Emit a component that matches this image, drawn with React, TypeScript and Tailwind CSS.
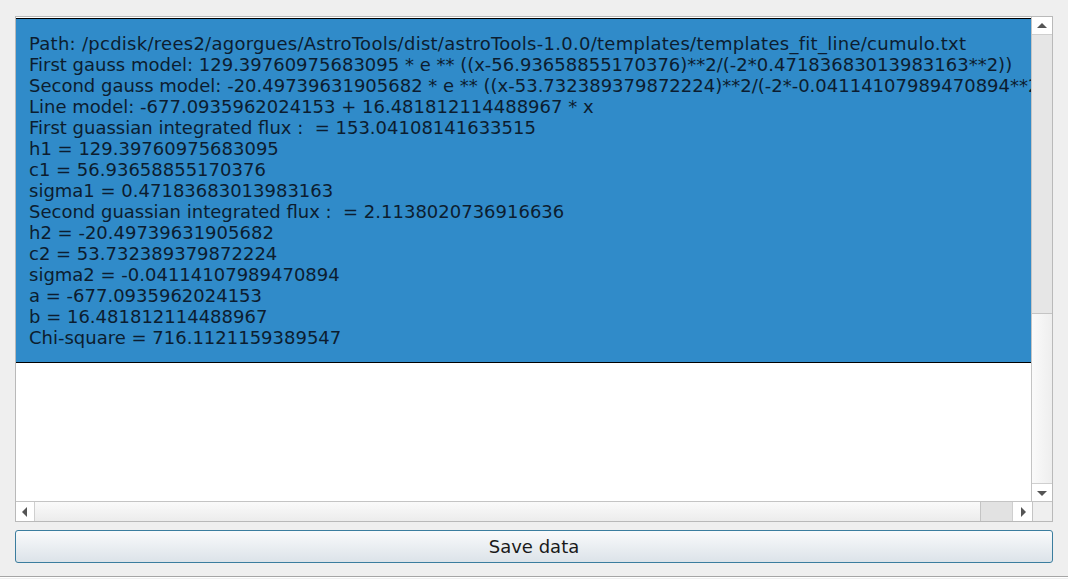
const lines = [
  "Path: /pcdisk/rees2/agorgues/AstroTools/dist/astroTools-1.0.0/templates/templates_fit_line/cumulo.txt",
  "First gauss model: 129.39760975683095 * e ** ((x-56.93658855170376)**2/(-2*0.47183683013983163**2))",
  "Second gauss model: -20.49739631905682 * e ** ((x-53.732389379872224)**2/(-2*-0.04114107989470894**2))",
  "Line model: -677.0935962024153 + 16.481812114488967 * x",
  "First guassian integrated flux :  = 153.04108141633515",
  "h1 = 129.39760975683095",
  "c1 = 56.93658855170376",
  "sigma1 = 0.47183683013983163",
  "Second guassian integrated flux :  = 2.1138020736916636",
  "h2 = -20.49739631905682",
  "c2 = 53.732389379872224",
  "sigma2 = -0.04114107989470894",
  "a = -677.0935962024153",
  "b = 16.481812114488967",
  "Chi-square = 716.1121159389547",
];

function Arrow({ dir }: { dir: "up" | "down" | "left" | "right" }) {
  const pts = {
    up: "0,7 5,2 10,7",
    down: "0,3 5,8 10,3",
    left: "7,0 2,5 7,10",
    right: "3,0 8,5 3,10",
  }[dir];
  return (
    <svg width="10" height="10" viewBox="0 0 10 10">
      <polygon points={pts} fill="#555555" />
    </svg>
  );
}

export default function App() {
  return (
    <div
      className="w-[1068px] h-[579px] bg-[#efefef] flex flex-col overflow-hidden"
      style={{ fontFamily: '"DejaVu Sans", sans-serif' }}
    >
      <div className="mt-[16px] mx-[15px] h-[506px] border border-[#b9b9b9] bg-white flex flex-col">
        <div className="flex flex-1 min-h-0">
          {/* output list */}
          <div className="flex-1 min-w-0 overflow-hidden pt-px">
            <div className="border-y border-black bg-[#308bc9] w-max min-w-full pl-[13px] pr-4 py-[14px] text-[18px] leading-[21px] text-[#0c1d30] whitespace-pre">
              {lines.map((l, i) => (
                <div key={i} className={i === 0 ? "tracking-[0.27px]" : ""}>
                  {l}
                </div>
              ))}
            </div>
          </div>
          {/* vertical scrollbar */}
          <div className="w-[21px] border-l border-[#c4c4c4] flex flex-col">
            <div className="h-[18px] bg-white border-b border-[#cfcfcf] flex items-center justify-center">
              <Arrow dir="up" />
            </div>
            <div className="h-[279px] bg-[#e6e6e6] border-b border-[#c4c4c4]" />
            <div className="flex-1 bg-gradient-to-r from-[#fafafa] to-[#eeeeee]" />
            <div className="h-[18px] bg-white border-t border-[#cfcfcf] flex items-center justify-center">
              <Arrow dir="down" />
            </div>
          </div>
        </div>
        {/* horizontal scrollbar */}
        <div className="h-[20px] border-t border-[#c4c4c4] flex">
          <div className="w-[19px] bg-white border-r border-[#cfcfcf] flex items-center justify-center">
            <Arrow dir="left" />
          </div>
          <div className="flex-1 bg-gradient-to-b from-[#fafafa] to-[#ececec]" />
          <div className="w-[32px] bg-[#e2e2e2] border-l border-[#c4c4c4]" />
          <div className="w-[20px] bg-white border-l border-[#cfcfcf] flex items-center justify-center">
            <Arrow dir="right" />
          </div>
          <div className="w-[20px] bg-[#efefef] border-l border-[#c4c4c4]" />
        </div>
      </div>
      <button className="mt-[8px] mx-[15px] h-[33px] rounded-[3px] border border-[#3b7d9e] bg-gradient-to-b from-[#f9fafb] to-[#dce3e9] text-[18px] text-[#1a1a1a] flex items-center justify-center">
        Save data
      </button>
      <div className="mt-auto mb-px h-[2px] border-t border-[#a5a5a5] bg-white" />
    </div>
  );
}
